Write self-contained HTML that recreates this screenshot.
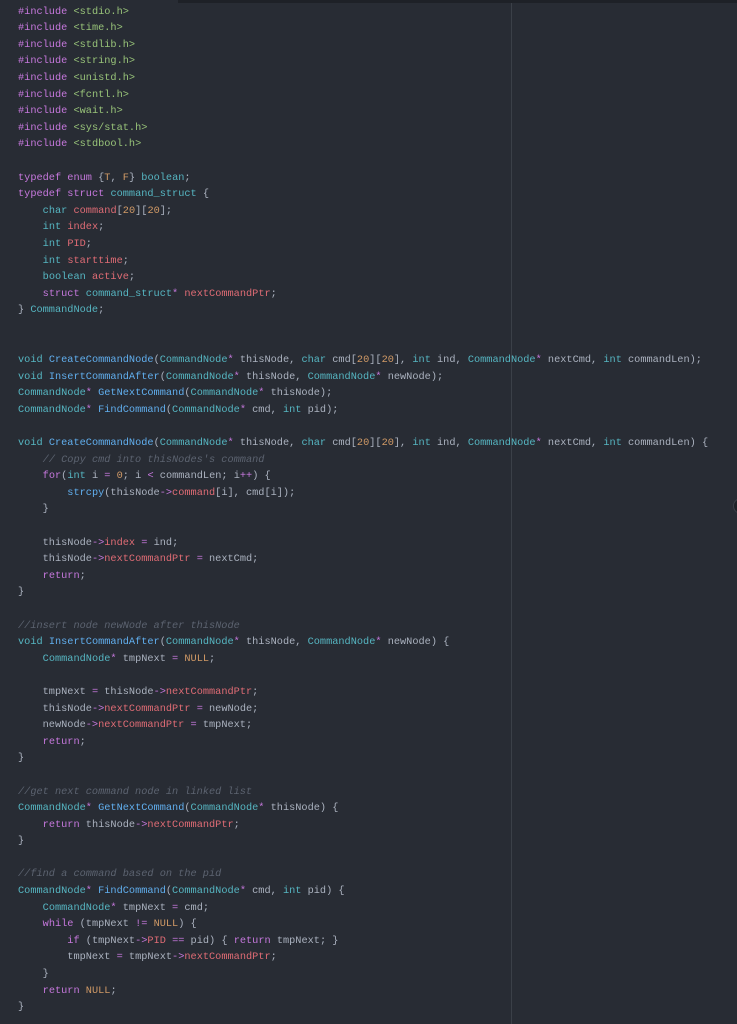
<!DOCTYPE html>
<html><head><meta charset="utf-8"><style>
html,body{margin:0;padding:0;background:#282c34;width:737px;height:1024px;overflow:hidden}
pre{margin:0;position:absolute;left:18px;top:3.6px;font-family:"Liberation Mono",monospace;font-size:10.27px;line-height:16.6px;color:#abb2bf;white-space:pre}
.k{color:#c678dd}.t{color:#56b6c2}.f{color:#61afef}.p{color:#e06c75}.n{color:#d19a66}.s{color:#98c379}.c{color:#5c6370;font-style:italic}.o{color:#c678dd}
#bar{position:absolute;left:178px;top:0;width:559px;height:3px;background:#1e2127}
#vl{position:absolute;left:511px;top:3px;width:1px;height:1021px;background:#3b4048}
#cir{position:absolute;left:733px;top:498px;width:14px;height:14px;border-radius:50%;background:#1e2127;border:1px solid #3b4048}
</style></head><body>
<div id="bar"></div><div id="vl"></div><div id="cir"></div>
<pre><span class="k">#include</span> <span class="s">&lt;stdio.h&gt;</span>
<span class="k">#include</span> <span class="s">&lt;time.h&gt;</span>
<span class="k">#include</span> <span class="s">&lt;stdlib.h&gt;</span>
<span class="k">#include</span> <span class="s">&lt;string.h&gt;</span>
<span class="k">#include</span> <span class="s">&lt;unistd.h&gt;</span>
<span class="k">#include</span> <span class="s">&lt;fcntl.h&gt;</span>
<span class="k">#include</span> <span class="s">&lt;wait.h&gt;</span>
<span class="k">#include</span> <span class="s">&lt;sys/stat.h&gt;</span>
<span class="k">#include</span> <span class="s">&lt;stdbool.h&gt;</span>

<span class="k">typedef</span> <span class="k">enum</span> {<span class="n">T</span>, <span class="n">F</span>} <span class="t">boolean</span>;
<span class="k">typedef</span> <span class="k">struct</span> <span class="t">command_struct</span> {
    <span class="t">char</span> <span class="p">command</span>[<span class="n">20</span>][<span class="n">20</span>];
    <span class="t">int</span> <span class="p">index</span>;
    <span class="t">int</span> <span class="p">PID</span>;
    <span class="t">int</span> <span class="p">starttime</span>;
    <span class="t">boolean</span> <span class="p">active</span>;
    <span class="k">struct</span> <span class="t">command_struct</span><span class="o">*</span> <span class="p">nextCommandPtr</span>;
} <span class="t">CommandNode</span>;


<span class="t">void</span> <span class="f">CreateCommandNode</span>(<span class="t">CommandNode</span><span class="o">*</span> thisNode, <span class="t">char</span> cmd[<span class="n">20</span>][<span class="n">20</span>], <span class="t">int</span> ind, <span class="t">CommandNode</span><span class="o">*</span> nextCmd, <span class="t">int</span> commandLen);
<span class="t">void</span> <span class="f">InsertCommandAfter</span>(<span class="t">CommandNode</span><span class="o">*</span> thisNode, <span class="t">CommandNode</span><span class="o">*</span> newNode);
<span class="t">CommandNode</span><span class="o">*</span> <span class="f">GetNextCommand</span>(<span class="t">CommandNode</span><span class="o">*</span> thisNode);
<span class="t">CommandNode</span><span class="o">*</span> <span class="f">FindCommand</span>(<span class="t">CommandNode</span><span class="o">*</span> cmd, <span class="t">int</span> pid);

<span class="t">void</span> <span class="f">CreateCommandNode</span>(<span class="t">CommandNode</span><span class="o">*</span> thisNode, <span class="t">char</span> cmd[<span class="n">20</span>][<span class="n">20</span>], <span class="t">int</span> ind, <span class="t">CommandNode</span><span class="o">*</span> nextCmd, <span class="t">int</span> commandLen) {
    <span class="c">// Copy cmd into thisNodes's command</span>
    <span class="k">for</span>(<span class="t">int</span> i <span class="o">=</span> <span class="n">0</span>; i <span class="o">&lt;</span> commandLen; i<span class="o">++</span>) {
        <span class="f">strcpy</span>(thisNode<span class="o">-&gt;</span><span class="p">command</span>[i], cmd[i]);
    }

    thisNode<span class="o">-&gt;</span><span class="p">index</span> <span class="o">=</span> ind;
    thisNode<span class="o">-&gt;</span><span class="p">nextCommandPtr</span> <span class="o">=</span> nextCmd;
    <span class="k">return</span>;
}

<span class="c">//insert node newNode after thisNode</span>
<span class="t">void</span> <span class="f">InsertCommandAfter</span>(<span class="t">CommandNode</span><span class="o">*</span> thisNode, <span class="t">CommandNode</span><span class="o">*</span> newNode) {
    <span class="t">CommandNode</span><span class="o">*</span> tmpNext <span class="o">=</span> <span class="n">NULL</span>;

    tmpNext <span class="o">=</span> thisNode<span class="o">-&gt;</span><span class="p">nextCommandPtr</span>;
    thisNode<span class="o">-&gt;</span><span class="p">nextCommandPtr</span> <span class="o">=</span> newNode;
    newNode<span class="o">-&gt;</span><span class="p">nextCommandPtr</span> <span class="o">=</span> tmpNext;
    <span class="k">return</span>;
}

<span class="c">//get next command node in linked list</span>
<span class="t">CommandNode</span><span class="o">*</span> <span class="f">GetNextCommand</span>(<span class="t">CommandNode</span><span class="o">*</span> thisNode) {
    <span class="k">return</span> thisNode<span class="o">-&gt;</span><span class="p">nextCommandPtr</span>;
}

<span class="c">//find a command based on the pid</span>
<span class="t">CommandNode</span><span class="o">*</span> <span class="f">FindCommand</span>(<span class="t">CommandNode</span><span class="o">*</span> cmd, <span class="t">int</span> pid) {
    <span class="t">CommandNode</span><span class="o">*</span> tmpNext <span class="o">=</span> cmd;
    <span class="k">while</span> (tmpNext <span class="o">!=</span> <span class="n">NULL</span>) {
        <span class="k">if</span> (tmpNext<span class="o">-&gt;</span><span class="p">PID</span> <span class="o">==</span> pid) { <span class="k">return</span> tmpNext; }
        tmpNext <span class="o">=</span> tmpNext<span class="o">-&gt;</span><span class="p">nextCommandPtr</span>;
    }
    <span class="k">return</span> <span class="n">NULL</span>;
}</pre>
</body></html>
